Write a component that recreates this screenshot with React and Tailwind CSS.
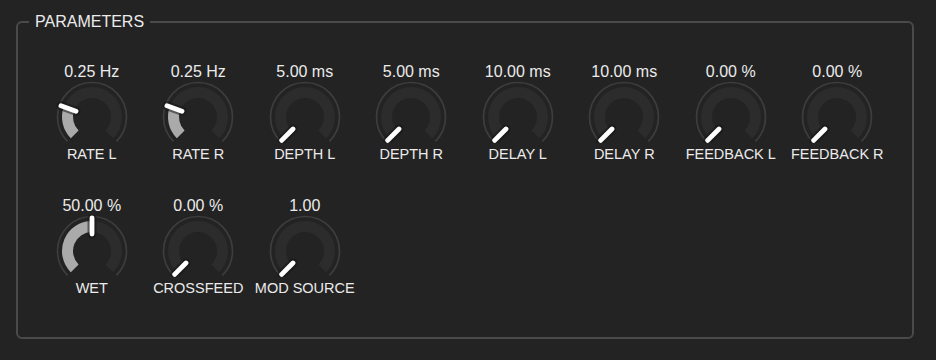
import React from 'react';

const KNOBS = [
    [
        { value: '0.25 Hz', label: 'RATE L', pos: 0.24 },
        { value: '0.25 Hz', label: 'RATE R', pos: 0.24 },
        { value: '5.00 ms', label: 'DEPTH L', pos: 0 },
        { value: '5.00 ms', label: 'DEPTH R', pos: 0 },
        { value: '10.00 ms', label: 'DELAY L', pos: 0 },
        { value: '10.00 ms', label: 'DELAY R', pos: 0 },
        { value: '0.00 %', label: 'FEEDBACK L', pos: 0 },
        { value: '0.00 %', label: 'FEEDBACK R', pos: 0 },
    ],
    [
        { value: '50.00 %', label: 'WET', pos: 0.5 },
        { value: '0.00 %', label: 'CROSSFEED', pos: 0 },
        { value: '1.00', label: 'MOD SOURCE', pos: 0 },
    ],
];

const pt = (r, deg) => {
    const a = (deg * Math.PI) / 180;
    return [r * Math.sin(a), -r * Math.cos(a)];
};

const arc = (r, from, to) => {
    const [x0, y0] = pt(r, from);
    const [x1, y1] = pt(r, to);
    const large = to - from > 180 ? 1 : 0;
    return `M ${x0} ${y0} A ${r} ${r} 0 ${large} 1 ${x1} ${y1}`;
};

const Knob = ({ pos }) => {
    const angle = -135 + 270 * pos;
    const [ix, iy] = pt(17, angle);
    const [ox, oy] = pt(33, angle);
    return (
        <svg width="72" height="62" viewBox="-36 -36 72 62">
            <path d={arc(34.5, -135, 135)} fill="none" stroke="#3d3d3d" strokeWidth="1.7" />
            <path d={arc(24.5, -135, 135)} fill="none" stroke="#2c2c2c" strokeWidth="11" />
            {pos > 0 && (
                <path d={arc(24.5, -135, angle)} fill="none" stroke="#aaaaaa" strokeWidth="11" />
            )}
            <line x1={ix} y1={iy} x2={ox} y2={oy} stroke="#151515" strokeOpacity="0.55" strokeWidth="9" strokeLinecap="round" />
            <line x1={ix} y1={iy} x2={ox} y2={oy} stroke="#ffffff" strokeWidth="4.8" strokeLinecap="round" />
        </svg>
    );
};

export default function App() {
    return (
        <div className="w-[936px] h-[360px] bg-[#232323] pl-4 pt-[12px] font-['Liberation_Sans',Arial,sans-serif] text-[#ebebeb]">
            <fieldset className="w-[898px] h-[327px] border-2 border-[#4a4a4a] rounded-[6px] pl-[20.5px]">
                <legend className="-ml-[9.5px] px-[6px] text-[16px] leading-[20px]">PARAMETERS</legend>

                <div className="flex flex-col gap-y-[33.5px] pt-[31px]">
                    {KNOBS.map((row, ri) => (
                        <div key={ri} className="grid grid-cols-[repeat(8,106.5px)]">
                            {row.map((k) => (
                                <div key={k.label} className="flex flex-col items-center">
                                    <div className="text-[16px] leading-[18px] h-[18px] whitespace-nowrap">{k.value}</div>
                                    <Knob pos={k.pos} />
                                    <div className="mt-[2px] text-[14.5px] leading-[18px] whitespace-nowrap">{k.label}</div>
                                </div>
                            ))}
                        </div>
                    ))}
                </div>
            </fieldset>
        </div>
    );
}
